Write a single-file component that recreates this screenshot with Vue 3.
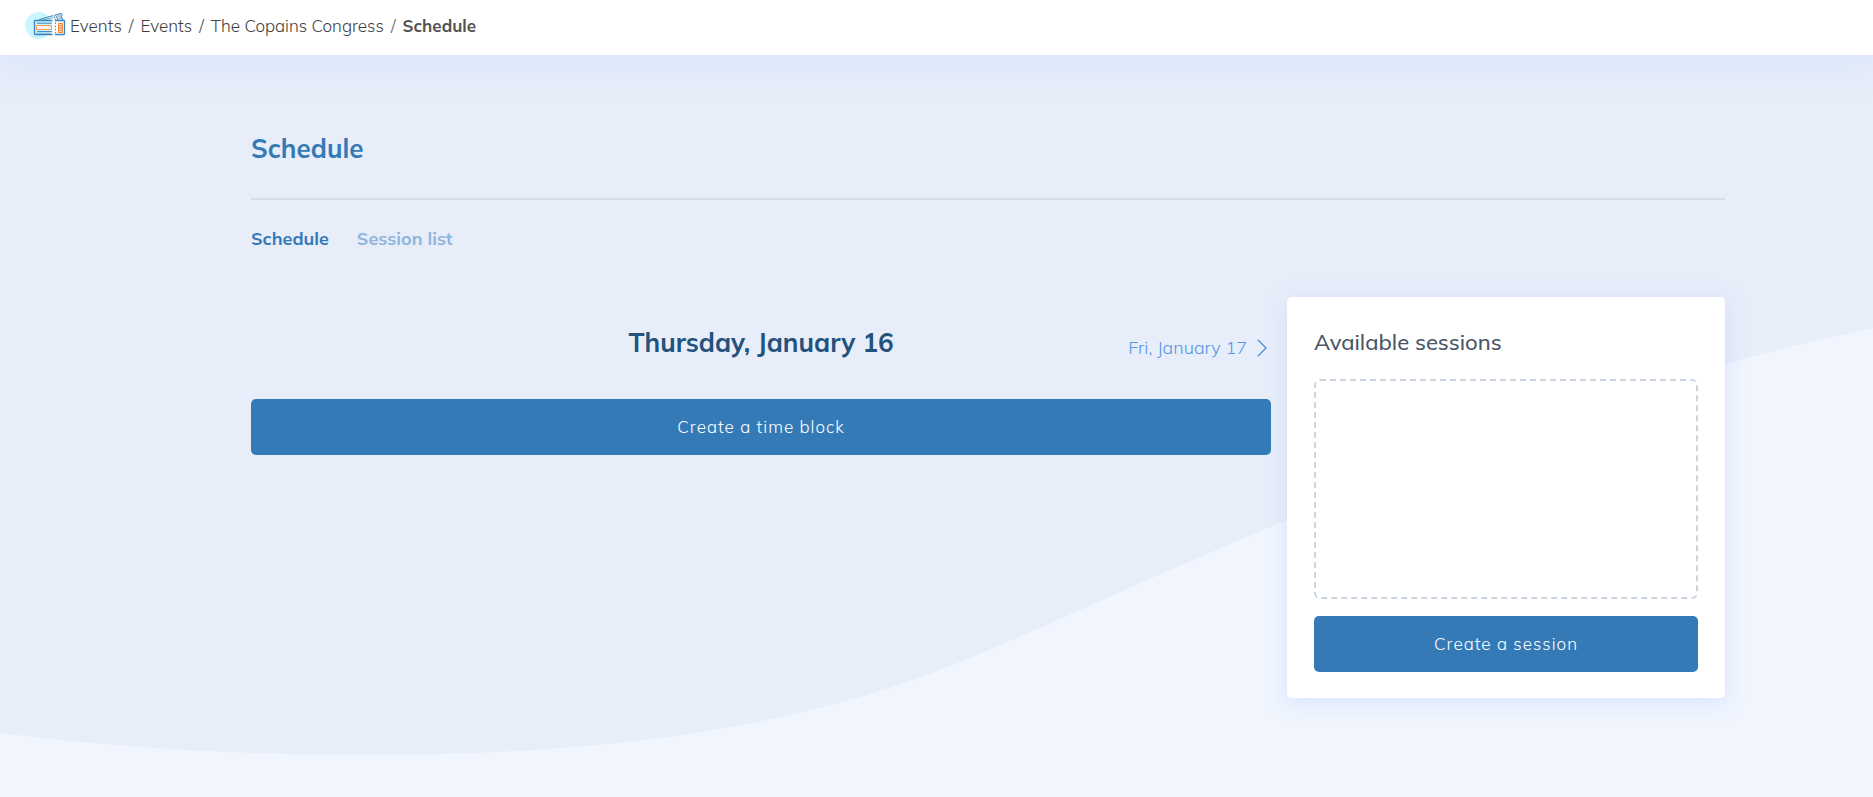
<script setup>
import { ref } from 'vue'

const crumbs = ['Events', 'Events', 'The Copains Congress']
const tabs = ['Schedule', 'Session list']
const activeTab = ref('Schedule')
</script>

<template>
  <div class="page">
    <svg class="wave" viewBox="0 0 1873 797" preserveAspectRatio="none" aria-hidden="true">
      <path
        d="M0 0H1873V328C1690 366 1480 437 1287 520C1170 568 1070 616 960 662C790 732 590 755 364 755C245 755 120 748 0 733Z"
        fill="#e7edf9"
      />
    </svg>

    <header class="topbar">
      <a class="logo" href="#" aria-label="Home">
        <svg width="42" height="30" viewBox="0 0 42 30" aria-hidden="true">
          <circle cx="13.5" cy="14.5" r="13.5" fill="#c9f6fe" />
          <g fill="none" stroke="#3c83bd" stroke-width="1">
            <path d="M14 8.7L28 4.6" />
            <path d="M18 9L28.5 6.4" stroke-width=".7" />
            <path d="M29 4.4L36.4 2.4L37.2 4.6L36.4 5.6L38 9" />
            <path d="M29 5L30.6 9M31.8 5.4l2.6-.8 1 2.8-2.4.8zM31 4.6l1.6 4M35.4 3.6l1.8 5" stroke-width=".7" />
            <path d="M27.5 9.5H10.2Q9.5 9.5 9.5 10.2V22.8Q9.5 23.5 10.2 23.5H27.5M30 9.5H38.8Q39.5 9.5 39.5 10.2V22.8Q39.5 23.5 38.8 23.5H30" stroke-width="1.3" />
            <path d="M12 12.2H27M12 20.6H27" />
            <path d="M12 22.2H27" stroke-width=".4" />
            <path d="M30.5 11.5V22" stroke-dasharray="1.4 1.8" />
          </g>
          <path d="M11.5 14.5H26.5V18.5H11.5Z" fill="#fff5ec" stroke="#f69a58" />
          <path d="M33 12H38V22H33Z" fill="#f58b3c" />
          <path d="M34 13.7H36.6M34 16H36.6M34 18.3H36.6M34 20.4H36.6" stroke="#fff" stroke-width=".9" />
        </svg>
      </a>
      <nav aria-label="Breadcrumb">
        <ol class="crumbs">
          <li v-for="(crumb, i) in crumbs" :key="i"><a href="#">{{ crumb }}</a></li>
          <li aria-current="page">Schedule</li>
        </ol>
      </nav>
    </header>

    <main class="container">
      <h1>Schedule</h1>

      <nav class="tabs" aria-label="Schedule views">
        <a
          v-for="tab in tabs"
          :key="tab"
          href="#"
          :class="{ active: tab === activeTab }"
          @click.prevent="activeTab = tab"
        >{{ tab }}</a>
      </nav>

      <div class="columns">
        <section class="day">
          <div class="day-head">
            <h2>Thursday, January 16</h2>
            <a class="next" href="#">
              Fri, January 17
              <svg width="10" height="18" viewBox="0 0 10 18" aria-hidden="true">
                <path d="M.8.8L9 9L.8 17.2" fill="none" stroke="currentColor" stroke-width="1.5" />
              </svg>
            </a>
          </div>
          <button class="primary" type="button">Create a time block</button>
        </section>

        <aside class="card">
          <h3>Available sessions</h3>
          <div class="dropzone"></div>
          <button class="primary" type="button">Create a session</button>
        </aside>
      </div>
    </main>
  </div>
</template>

<style>
body {
  margin: 0;
  background: #f0f5fe;
}
</style>

<style scoped>
.page {
  position: relative;
  min-height: 100vh;
  font-family: Mulish, Muli, Lato, sans-serif;
  color: #525252;
}

.page * {
  box-sizing: border-box;
}

.wave {
  position: absolute;
  inset: 0;
  width: 100%;
  height: 100%;
}

a {
  color: inherit;
  text-decoration: none;
}

h1,
h2,
h3 {
  margin: 0;
}

.topbar {
  position: relative;
  display: flex;
  align-items: center;
  height: 55px;
  padding: 0 25px 4px;
  background: #fff;
  box-shadow: 0 8px 32px rgba(195, 218, 254, 0.4);
}

.logo {
  display: flex;
  width: 45px;
}

.crumbs {
  display: flex;
  margin: 0;
  padding: 0;
  list-style: none;
  font-size: 17px;
  line-height: 24px;
  font-weight: 300;
  color: #404040;
}

.crumbs li + li::before {
  content: '/';
  padding: 0 7px;
  font-weight: 300;
}

.crumbs [aria-current] {
  font-weight: 700;
  color: #525252;
}

.container {
  position: relative;
  width: calc(100% - 399px);
  margin: 0 148px 0 251px;
  padding: 76px 0 48px;
}

h1 {
  padding-bottom: 31px;
  border-bottom: 2px solid #d4dce8;
  font-size: 26px;
  line-height: 36px;
  font-weight: 700;
  color: #347ab6;
}

.tabs {
  display: flex;
  gap: 28px;
  margin-top: 27px;
  font-size: 18px;
  line-height: 24px;
  font-weight: 700;
  color: #8fb5dc;
}

.tabs .active {
  color: #347ab6;
}

.columns {
  display: flex;
  align-items: flex-start;
  gap: 16px;
  margin-top: 46px;
}

.day {
  flex: 1;
}

.day-head {
  display: grid;
  grid-template-columns: 1fr auto 1fr;
  align-items: center;
  height: 102px;
  padding-bottom: 10px;
}

.day-head h2 {
  grid-column: 2;
  font-size: 26px;
  line-height: 36px;
  font-weight: 700;
  color: #23527c;
}

.next {
  display: flex;
  align-items: center;
  justify-self: end;
  gap: 10px;
  padding: 10px 4px 0 0;
  font-size: 18px;
  line-height: 24px;
  font-weight: 300;
  color: #5795e2;
}

.primary {
  display: block;
  width: 100%;
  height: 56px;
  padding: 0 0 2px;
  border: 0;
  border-radius: 5px;
  background: #347ab6;
  color: #fff;
  font-family: inherit;
  font-size: 17px;
  font-weight: 300;
  letter-spacing: 1px;
  cursor: pointer;
}

.card {
  width: 438px;
  padding: 27px 27px 26px;
  border-radius: 5px;
  background: #fff;
  box-shadow: 0 4px 20px rgba(176, 205, 254, 0.4);
}

.card h3 {
  font-size: 22px;
  line-height: 36px;
  font-weight: 500;
  color: #4a5568;
}

.dropzone {
  height: 220px;
  margin: 19px 0 17px;
  border: 2px dashed #cbd5e0;
  border-radius: 6px;
}
</style>
